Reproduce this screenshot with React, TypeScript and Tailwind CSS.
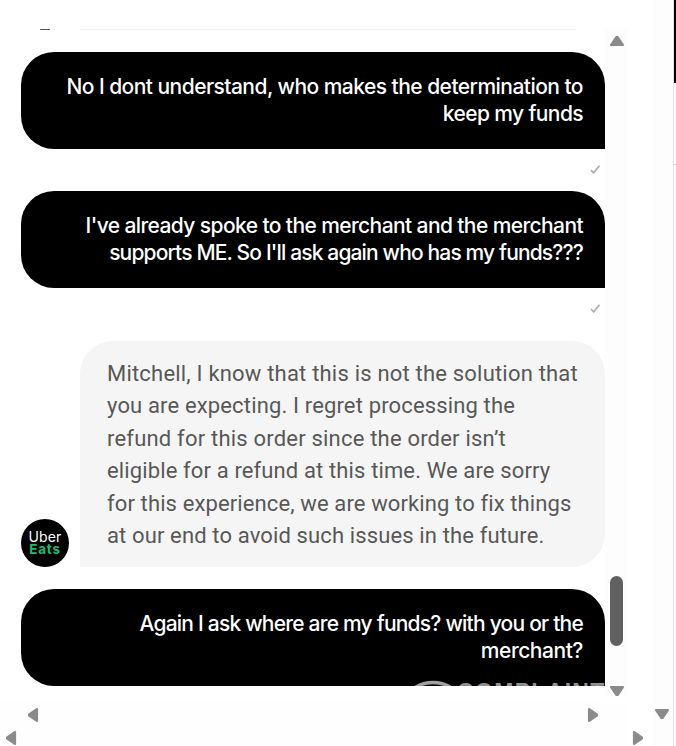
import React from "react";

type Line = { text: string; tracking: string };

const first: Line[] = [
  { text: "No I dont understand, who makes the determination to", tracking: "tracking-[-0.54px]" },
  { text: "keep my funds", tracking: "tracking-[-0.6px]" },
];
const second: Line[] = [
  { text: "I've already spoke to the merchant and the merchant", tracking: "tracking-[-0.6px]" },
  { text: "supports ME. So I'll ask again who has my funds???", tracking: "tracking-[-0.85px]" },
];
const third: Line[] = [
  { text: "Again I ask where are my funds? with you or the", tracking: "tracking-[-0.78px]" },
  { text: "merchant?", tracking: "tracking-[-0.45px]" },
];
const reply: Line[] = [
  { text: "Mitchell, I know that this is not the solution that", tracking: "tracking-[0.2px]" },
  { text: "you are expecting. I regret processing the", tracking: "tracking-[0.15px]" },
  { text: "refund for this order since the order isn’t", tracking: "tracking-[0.2px]" },
  { text: "eligible for a refund at this time. We are sorry", tracking: "tracking-[0.13px]" },
  { text: "for this experience, we are working to fix things", tracking: "tracking-[0.12px]" },
  { text: "at our end to avoid such issues in the future.", tracking: "tracking-[0.13px]" },
];

function Outgoing({ lines }: { lines: Line[] }) {
  return (
    <div className="ml-[21px] flex h-[97px] w-[584px] shrink-0 flex-col items-end rounded-[33px] rounded-br-none bg-black pt-[21px] pr-[22px] font-['Inter',sans-serif] text-[21px] leading-[27px] font-medium text-white">
      {lines.map((l) => (
        <span key={l.text} className={`block whitespace-nowrap ${l.tracking}`}>{l.text}</span>
      ))}
    </div>
  );
}

function Check() {
  return (
    <div className="flex h-[42px] shrink-0 items-center justify-end pr-[4px] pb-[1px]">
      <svg width="11" height="11" viewBox="0 0 11 11" fill="none" stroke="#adadad" strokeWidth="1.8">
        <path d="M1 6.2 3.7 8.8 9.5 1.8" />
      </svg>
    </div>
  );
}

function Arrow({ turn }: { turn: string }) {
  return (
    <svg width="14" height="14" viewBox="0 0 14 14" className={`shrink-0 ${turn}`} fill="#8b8b8b" stroke="#8b8b8b" strokeWidth="2.4" strokeLinejoin="round">
      <path d="M6.4 3.2H7.6L12.8 10.9H1.2Z" />
    </svg>
  );
}

export default function App() {
  return (
    <div className="flex h-[746px] w-[676px] overflow-hidden bg-white">
      <div className="flex w-[627px] shrink-0 flex-col">
        <div className="h-[29px] shrink-0" />
        <div className="relative flex h-[668px]">
          <main className="flex h-[657px] w-[605px] flex-col overflow-hidden">
            <div className="flex h-[23px] shrink-0 items-start">
              <div className="ml-[40px] h-px w-[10px] rounded-full bg-[#555]" />
              <div className="ml-[30px] h-px w-[496px] bg-[#f3f3f3]" />
            </div>
            <Outgoing lines={first} />
            <Check />
            <Outgoing lines={second} />
            <Check />
            <div className="mt-[11px] flex h-[226px] shrink-0 items-end pl-[21px]">
              <div className="flex size-12 flex-col items-center justify-center rounded-full bg-black font-['Inter',sans-serif] text-[14px] leading-[13px] text-white">
                <span className="tracking-[0.1px]">Uber</span>
                <span className="text-[13.5px] font-bold tracking-[0.8px] text-[#25b66d]">Eats</span>
              </div>
              <div className="ml-[11px] h-[226px] w-[525px] rounded-[33px] rounded-bl-none bg-[#f5f5f5] pt-[17px] pl-[27px] font-['Roboto',sans-serif] text-[22px] leading-[32.4px] text-[#585858]">
                {reply.map((l) => (
                  <span key={l.text} className={`block w-max whitespace-nowrap ${l.tracking}`}>{l.text}</span>
                ))}
              </div>
            </div>
            <div className="h-[22px] shrink-0" />
            <Outgoing lines={third} />
          </main>
          <aside className="flex w-[22px] flex-col items-center bg-[#fdfdfd] pt-[5px] pl-px">
            <Arrow turn="" />
            <div className="mt-[528px] h-[70px] w-[13px] shrink-0 rounded-full bg-[#606060]" />
            <div className="mt-[38px]"><Arrow turn="rotate-180" /></div>
          </aside>
          <div className="absolute top-[651px] left-[413px] h-[6px] w-[193px] overflow-hidden">
            <svg width="214" height="30" viewBox="0 0 214 30" className="max-w-none">
              <ellipse cx="20" cy="18" rx="24" ry="15.5" fill="none" stroke="#a0a0a0" strokeWidth="3.5" />
              <text x="44" y="19.5" fill="#909090" fontFamily="Liberation Sans" fontWeight="700" fontSize="23" textLength="164">COMPLAINTS</text>
            </svg>
          </div>
        </div>
        <div className="mt-[5px] flex h-[27px] items-center justify-between bg-[#fefefe] pr-[27px] pb-[2px] pl-[26px]">
          <Arrow turn="-rotate-90" />
          <Arrow turn="rotate-90" />
        </div>
        <div className="flex h-[17px] items-center bg-[#fefefe] pl-[4px]"><Arrow turn="-rotate-90" /></div>
      </div>
      <div className="flex w-[26px] shrink-0 flex-col justify-end pb-[1px] pl-[4px]">
        <Arrow turn="rotate-90" />
      </div>
      <div className="flex w-[20px] shrink-0 flex-col items-center justify-end bg-[#fdfdfd] pr-[3px] pb-[25px]">
        <Arrow turn="rotate-180" />
      </div>
      <div className="w-px shrink-0 bg-[#e3e3e3]" />
      <div className="flex w-[2px] shrink-0 flex-col">
        <div className="h-[83px] bg-black" />
        <div className="mt-[81px] h-px bg-[#cfcfcf]" />
      </div>
    </div>
  );
}
